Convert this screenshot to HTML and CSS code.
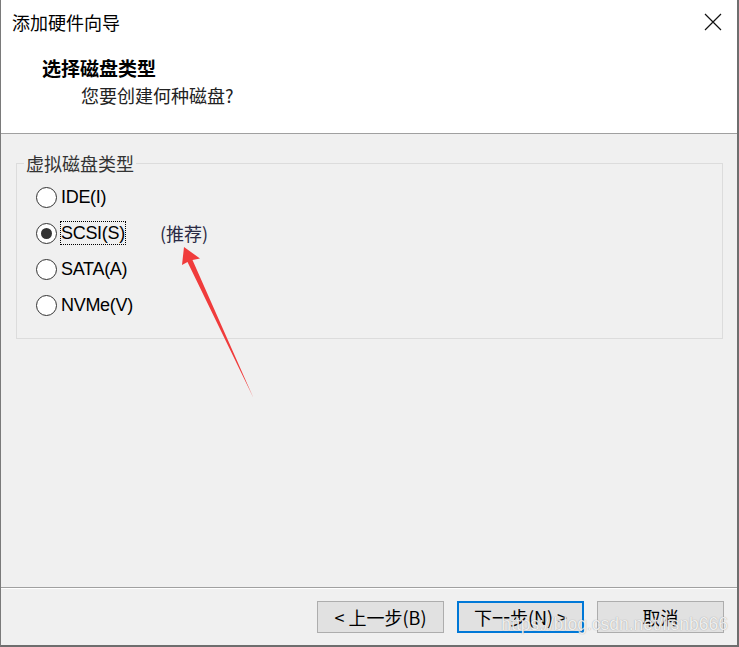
FILE: index.html
```html
<!DOCTYPE html>
<html lang="zh-CN">
<head>
<meta charset="utf-8">
<title>添加硬件向导</title>
<link rel="stylesheet" href="styles.css">
</head>
<body>
<div class="window">
  <div class="header">
    <div class="titlebar">
      <span class="title">添加硬件向导</span>
      <svg class="close" width="18" height="18" viewBox="0 0 18 18"><path d="M1 1 L17 17 M17 1 L1 17" stroke="#111" stroke-width="1.2" fill="none"/></svg>
    </div>
    <div class="heading">选择磁盘类型</div>
    <div class="subheading">您要创建何种磁盘?</div>
  </div>
  <div class="content">
    <fieldset class="group">
      <legend class="legend">虚拟磁盘类型</legend>
      <div class="options">
        <div class="option"><span class="radio"></span><span class="label">IDE(I)</span></div>
        <div class="option"><span class="radio checked"></span><span class="label focus">SCSI(S)</span><span class="rec">(推荐)</span></div>
        <div class="option"><span class="radio"></span><span class="label">SATA(A)</span></div>
        <div class="option"><span class="radio"></span><span class="label">NVMe(V)</span></div>
      </div>
    </fieldset>
    <svg class="arrow" width="739" height="647" viewBox="0 0 739 647">
      <polygon points="184,247 200,258.5 192.5,260 253.5,398 187.5,262 182,265" fill="#f03c3c"/>
    </svg>
  </div>
  <div class="footer">
    <button class="btn">&lt; 上一步(B)</button>
    <button class="btn primary">下一步(N) &gt;</button>
    <button class="btn">取消</button>
    <span class="watermark">https://blog.csdn.net/lisnb666</span>
  </div>
</div>
</body>
</html>
```

FILE: styles.css
```css
* { box-sizing: border-box; }
html, body { margin: 0; padding: 0; }
body {
  width: 739px;
  height: 647px;
  background: #f0f0f0;
  font-family: "Noto Sans CJK SC", "Liberation Sans", sans-serif;
  overflow: hidden;
}
.window {
  position: relative;
  width: 739px;
  height: 647px;
  display: flex;
  flex-direction: column;
  border-left: 1px solid #7a7a7a;
  border-right: 2px solid #6e6e6e;
  border-bottom: 2px solid #6e6e6e;
  background: #f0f0f0;
}
.header {
  height: 134px;
  background: #fff;
  border-bottom: 1px solid #a0a0a0;
  flex: none;
}
.titlebar {
  height: 44px;
  display: flex;
  align-items: center;
  justify-content: space-between;
  padding-left: 11px;
  padding-right: 15px;
}
.title {
  font-size: 18px;
  color: #000;
  line-height: 20px;
}
.close { display: block; }
.heading {
  margin-top: 14px;
  padding-left: 41px;
  font-size: 19px;
  font-weight: 700;
  line-height: 20px;
  color: #000;
}
.subheading {
  margin-top: 7px;
  padding-left: 80px;
  font-size: 18px;
  line-height: 20px;
  color: #222;
}
.content {
  flex: 1;
  padding: 19px 14px 0 15px;
  border-bottom: 1px solid #a0a0a0;
  box-shadow: 0 1px 0 #fff;
}
.group {
  margin: 0;
  padding: 0;
  border: 1px solid #dcdcdc;
  height: 186px;
}
.legend {
  margin-left: 7px;
  padding: 0 2px;
  font-size: 18px;
  line-height: 20px;
  color: #333;
}
.options {
  padding: 6px 0 0 19px;
}
.option {
  height: 36px;
  display: flex;
  align-items: center;
}
.radio {
  width: 21px;
  height: 21px;
  border: 1px solid #333;
  border-radius: 50%;
  background: #fff;
  display: flex;
  align-items: center;
  justify-content: center;
  flex: none;
}
.radio.checked::after {
  content: "";
  width: 11px;
  height: 11px;
  border-radius: 50%;
  background: #333;
}
.label {
  margin-left: 3px;
  padding: 0;
  font-family: "Liberation Sans", "Noto Sans", sans-serif;
  font-size: 18px;
  letter-spacing: -0.3px;
  line-height: 22px;
  color: #000;
  border: 1px dotted transparent;
}
.label.focus { border-color: #000; }
.rec {
  margin-left: 34px;
  font-size: 18px;
  line-height: 22px;
  color: #2a2a44;
}
.arrow {
  position: absolute;
  left: -1px;
  top: 0;
  pointer-events: none;
}
.footer {
  height: 57px;
  flex: none;
  display: flex;
  justify-content: flex-end;
  align-items: flex-start;
  gap: 13px;
  padding: 13px 13px 0 0;
  position: relative;
}
.btn {
  width: 127px;
  height: 32px;
  border: 1px solid #adadad;
  background: #e1e1e1;
  font-family: "Noto Sans CJK SC", "Liberation Sans", sans-serif;
  font-size: 18px;
  color: #000;
  padding: 0;
  line-height: 20px;
}
.btn.primary {
  border: 2px solid #0078d7;
}
.watermark {
  position: absolute;
  right: 9px;
  top: 26px;
  font-family: "Liberation Sans", sans-serif;
  font-size: 17.5px;
  color: rgba(255, 255, 255, 0.85);
  text-shadow: 0 0 1px rgba(90, 90, 90, 0.6);
  pointer-events: none;
}
```
